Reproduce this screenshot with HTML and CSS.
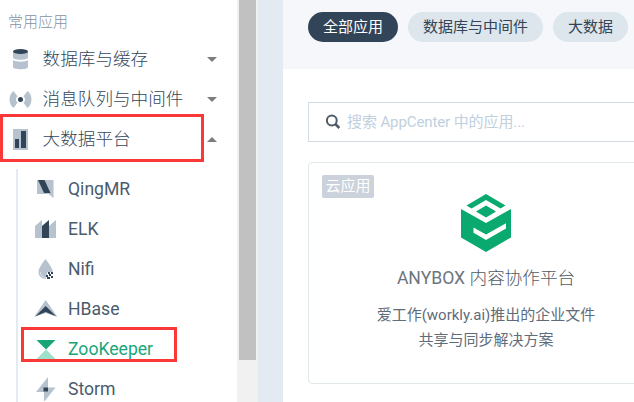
FILE: index.html
```html
<!DOCTYPE html>
<html lang="zh-CN">
<head>
<meta charset="utf-8">
<title>AppCenter</title>
<link rel="stylesheet" href="styles.css">
</head>
<body>
<div class="app">
  <aside class="sidebar">
    <h2 class="group-title">常用应用</h2>
    <nav class="menu">
      <a class="menu-item">
        <svg class="icon" viewBox="0 0 24 24"><path d="M5 5v5.500c0 3 15 3 15 0V5z" fill="#b6c2cd"/><path d="M5 13v7c0 3 15 3 15 0v-7c-2 2.300-13 2.300-15 0z" fill="#b6c2cd"/><ellipse cx="12.500" cy="4.500" rx="7.500" ry="2.500" fill="#324558"/></svg>
        <span class="label">数据库与缓存</span><i class="arrow"></i>
      </a>
      <a class="menu-item">
        <svg class="icon" viewBox="0 0 24 24"><path d="M5.500 4C.2 8 .2 17 5.500 21l4-5.200c-2-1.800-2-4.800 0-6.600zM19.500 4c5.300 4 5.300 13 0 17l-4-5.200c2-1.800 2-4.800 0-6.600z" fill="#b6c2cd"/><circle cx="12.500" cy="12.500" r="2.500" fill="#324558"/></svg>
        <span class="label">消息队列与中间件</span><i class="arrow"></i>
      </a>
      <a class="menu-item">
        <svg class="icon" viewBox="0 0 24 24"><path d="M5 2h15v21H5z" fill="#b6c2cd"/><path d="M7 12h4v9H7zM13 4h5v17h-5z" fill="#324558"/></svg>
        <span class="label">大数据平台</span><i class="arrow open"></i>
        <span class="mark mark-group"></span>
      </a>
      <div class="submenu">
        <a class="sub-item"><svg class="icon" viewBox="0 0 24 24"><path d="M3 3h16.500v18l-5-4H3z" fill="#b6c2cd"/><path d="M4 3h6.500l6 13H10z" fill="#324558"/></svg><span>QingMR</span></a>
        <a class="sub-item"><svg class="icon" viewBox="0 0 24 24"><path d="M1 9l7-6v18H1zM15 9l7-6v18h-7z" fill="#b6c2cd"/><path d="M8 9l7-6v18H8z" fill="#324558"/></svg><span>ELK</span></a>
        <a class="sub-item"><svg class="icon" viewBox="0 0 24 24"><path d="M11.500 2C8 7 4.500 11 4.500 15a7 7 0 0 0 7 7l2-7h5.300C18.600 11 15 7 11.500 2z" fill="#b6c2cd"/><path d="M6.300 15c0 3 2 5 4.200 5.500" fill="none" stroke="#e1e8ef" stroke-width=".7"/><path d="M14 15h2v2h-2zM17 15h2v2h-2zM12 18h2v2h-2zM15 17h2v2h-2zM17 19h2v2h-2zM13 20h3v2h-3z" fill="#324558"/></svg><span>Nifi</span></a>
        <a class="sub-item"><svg class="icon" viewBox="0 0 24 24"><path d="M11.700 3L23.500 20l-11.800-4L0 20z" fill="#b6c2cd"/><path d="M11.700 9L22 19.300 11.700 15 1.500 19.300z" fill="#324558"/></svg><span>HBase</span></a>
        <a class="sub-item active"><svg class="icon" viewBox="0 0 24 24"><path d="M2.500 3h19L12 12.500z" fill="#18a678"/><path d="M12 12.500l9.500 9.500h-19z" fill="#9de0cb"/></svg><span>ZooKeeper</span><span class="mark mark-item"></span></a>
        <a class="sub-item"><svg class="icon" viewBox="0 0 24 24"><path d="M14 0v10.500h7.500L10 25V15H2z" fill="#b6c2cd"/><path d="M9.500 10.500h4.500v4H9.500z" fill="#324558"/></svg><span>Storm</span></a>
      </div>
    </nav>
  </aside>
  <div class="scrollbar"><div class="thumb"></div></div>
  <div class="gutter"></div>
  <main class="content">
    <div class="filters">
      <span class="pill selected">全部应用</span>
      <span class="pill">数据库与中间件</span>
      <span class="pill">大数据</span>
    </div>
    <div class="search">
      <svg class="search-icon" viewBox="0 0 16 16"><circle cx="6.800" cy="6.500" r="4.900" fill="none" stroke="#4f5b66" stroke-width="2"/><path d="M10.300 10l4 4" stroke="#4f5b66" stroke-width="2.500"/></svg>
      <span class="placeholder">搜索 AppCenter 中的应用...</span>
    </div>
    <article class="card">
      <span class="tag">云应用</span>
      <svg class="logo" viewBox="0 0 50 58"><path d="M0 15l25 14 25-14v28.500L25 58 0 43.500z" fill="#09a970"/><path d="M25 0l19.500 11.500-5 3L25 6 10.500 14.500l-5-3zM25 11.500l10 6-10 6-10-6z" fill="#09a970"/><path d="M12.500 33.500v5.200L25 46l20-11.500v-5.300L25 40.500z" fill="#fff"/></svg>
      <h3 class="card-title">ANYBOX <span class="cjk">内容协作平台</span></h3>
      <p class="card-text">爱工作(workly.ai)推出的企业文件<br>共享与同步解决方案</p>
    </article>
  </main>
</div>
</body>
</html>
```
FILE: styles.css
```css
* { box-sizing: border-box; }

body {
  margin: 0;
  overflow: hidden;
  background: #fff;
  color: #4a5b6c;
  font-family: Roboto, "Noto Sans CJK SC", sans-serif;
  font-size: 15px;
}

.app { display: flex; height: 402px; overflow: hidden; }

.sidebar { width: 237px; flex: none; }

.group-title {
  margin: 0;
  padding: 3px 0 0 8px;
  height: 39px;
  color: #8492a0;
  font-size: 15px;
  font-weight: 300;
  line-height: 38px;
}

.menu-item {
  position: relative;
  display: flex;
  align-items: center;
  height: 40px;
  padding: 0 20px 0 8px;
}

.icon { width: 24px; height: 24px; flex: none; }

.label {
  flex: 1;
  margin-left: 10.6px;
  font-size: 17.6px;
  font-weight: 300;
  line-height: 40px;
  color: #34475a;
}

.arrow {
  border: solid transparent;
  border-width: 5px 5.5px 0;
  border-top-color: #7d7d7d;
}

.arrow.open {
  border-width: 0 5.5px 5px;
  border-bottom-color: #7d7d7d;
}

.submenu {
  margin: 10px 0 0 16px;
  border-left: 2px solid #e3eaf1;
}

.sub-item {
  position: relative;
  display: flex;
  align-items: center;
  gap: 10px;
  height: 40px;
  padding-left: 16px;
  font-size: 17.6px;
}

.active { color: #18a678; }

.mark {
  position: absolute;
  border: 3px solid #fb3838;
}

.mark-group { left: 0; top: -5px; width: 204px; height: 48px; }

.mark-item { left: 3px; top: -2px; width: 156px; height: 35px; }

.scrollbar {
  width: 21px;
  flex: none;
  padding: 0 2px;
  background: #f1f1f1;
}

.thumb { height: 360px; background: #c1c1c1; }

.gutter { width: 25px; flex: none; background: #e3eaf1; }

.content { width: 406px; flex: none; }

.filters {
  display: flex;
  gap: 10px;
  height: 69px;
  padding: 12px 25px;
  background: #f5f7fa;
}

.pill {
  height: 30px;
  padding: 0 15px;
  border-radius: 15px;
  background: #dde6ec;
  color: #324558;
  line-height: 30px;
  white-space: nowrap;
}

.selected { background: #324558; color: #fff; }

.search {
  display: flex;
  align-items: center;
  gap: 6px;
  height: 40px;
  margin: 33px 0 20px 25px;
  padding-left: 16px;
  border: 1px solid #d3dce6;
  color: #c0d0de;
}

.search-icon { width: 16px; height: 16px; }

.placeholder { padding-bottom: 3px; letter-spacing: -0.1px; }

.card {
  display: flex;
  flex-direction: column;
  align-items: center;
  width: 356px;
  height: 222px;
  margin-left: 25px;
  padding: 12px 13px;
  border: 1px solid #e1e8e8;
  border-radius: 4px;
}

.tag {
  align-self: flex-start;
  height: 23px;
  padding: 0 3.5px;
  border-radius: 2px;
  background: #cbd2db;
  color: #fff;
  line-height: 22px;
}

.logo { width: 50px; height: 58px; margin-top: -4px; }

.card-title {
  margin: 11px 0 0;
  font-size: 17.6px;
  font-weight: 400;
  line-height: 30px;
  color: #6b757f;
}

.cjk { font-weight: 300; color: #4f5963; }

.card-text {
  margin: 10px 0 0;
  line-height: 25px;
  text-align: center;
  color: #5f6c79;
}
```
